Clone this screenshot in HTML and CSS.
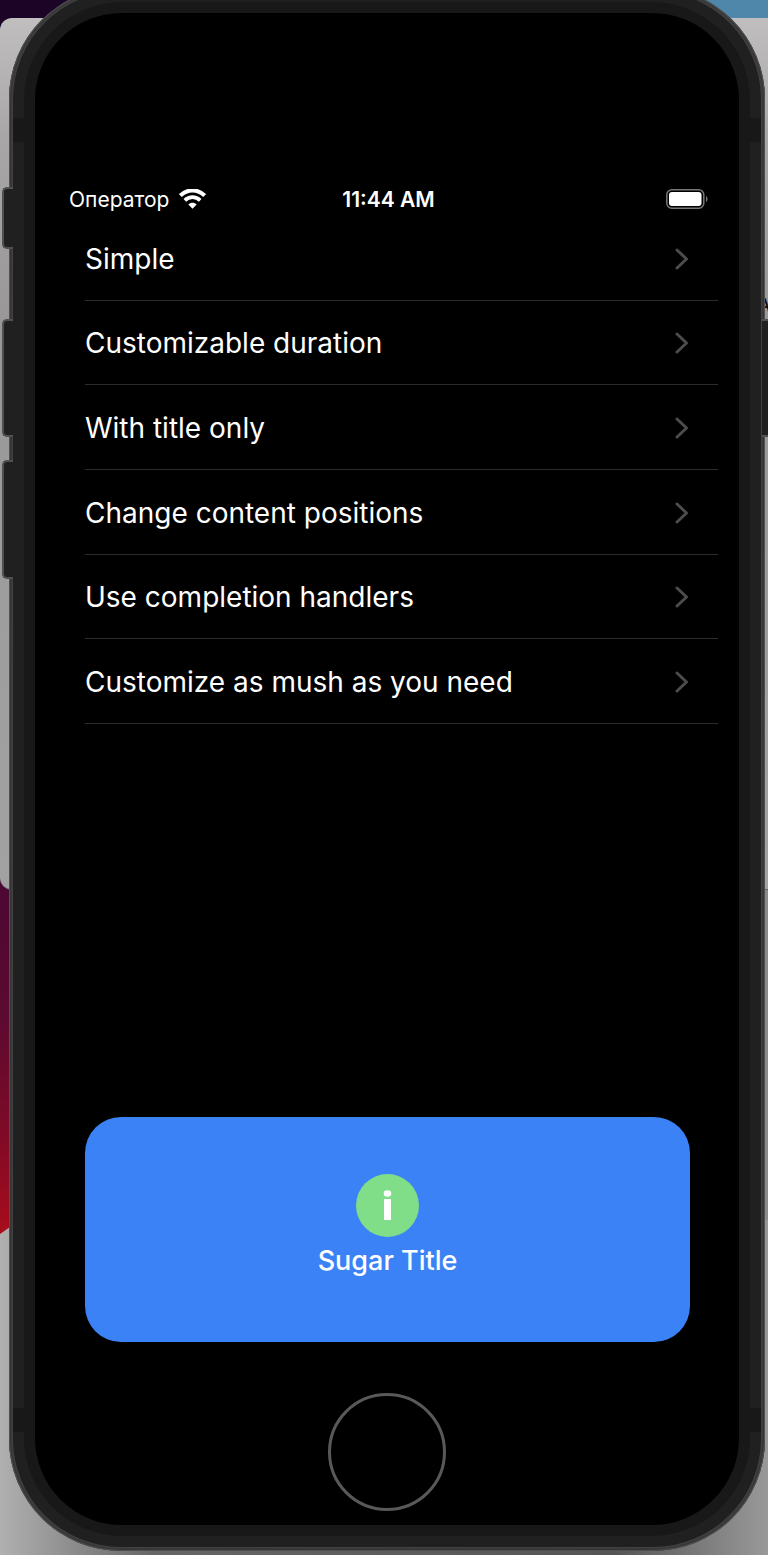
FILE: index.html
```html
<!DOCTYPE html>
<html lang="en">
<head>
<meta charset="utf-8">
<meta name="viewport" content="width=device-width, initial-scale=1">
<title>Sugar demo</title>
<link rel="stylesheet" href="styles.css">
</head>
<body>
<div class="desktop">
  <div class="wallpaper" aria-hidden="true">
    <div class="sky"></div>
    <div class="petal"></div>
    <div class="lower"></div>
    <div class="window"><span class="window-letter">A</span></div>
  </div>

  <main class="phone">
    <span class="key key-mute"></span>
    <span class="key key-up"></span>
    <span class="key key-down"></span>
    <span class="key key-power"></span>
    <div class="case">
      <span class="seam seam-top"></span>
      <span class="seam seam-bottom"></span>
      <div class="screen">
        <header class="status">
          <div class="carrier">
            <span>Оператор</span>
            <svg class="wifi" viewBox="0 0 26 20" aria-hidden="true">
              <path d="M1.300 6.200C8-.4 18-.4 24.700 6.200" fill="none" stroke="#fff" stroke-width="4"/>
              <path d="M5.600 10.800c4.200-4 10.600-4 14.800 0" fill="none" stroke="#fff" stroke-width="3.600"/>
              <path d="M13 19l-4-4.200c2.200-2.100 5.800-2.100 8 0z" fill="#fff"/>
            </svg>
          </div>
          <time class="clock">11:44 AM</time>
          <svg class="battery" viewBox="0 0 42 20" aria-hidden="true">
            <rect x=".8" y=".8" width="37" height="18.400" rx="5" fill="none" stroke="#77777a" stroke-width="1.500"/>
            <rect x="3" y="3" width="32.500" height="14" rx="3" fill="#fff"/>
            <path d="M40 7v6c2-1 2-5 0-6z" fill="#77777a"/>
          </svg>
        </header>

        <nav class="list">
          <a class="row" href="#simple">Simple<svg class="chevron" viewBox="0 0 14 22" aria-hidden="true"><path d="M2 2l9.500 9L2 20"/></svg></a>
          <a class="row" href="#duration">Customizable duration<svg class="chevron" viewBox="0 0 14 22" aria-hidden="true"><path d="M2 2l9.500 9L2 20"/></svg></a>
          <a class="row" href="#title">With title only<svg class="chevron" viewBox="0 0 14 22" aria-hidden="true"><path d="M2 2l9.500 9L2 20"/></svg></a>
          <a class="row" href="#positions">Change content positions<svg class="chevron" viewBox="0 0 14 22" aria-hidden="true"><path d="M2 2l9.500 9L2 20"/></svg></a>
          <a class="row" href="#handlers">Use completion handlers<svg class="chevron" viewBox="0 0 14 22" aria-hidden="true"><path d="M2 2l9.500 9L2 20"/></svg></a>
          <a class="row" href="#customize">Customize as mush as you need<svg class="chevron" viewBox="0 0 14 22" aria-hidden="true"><path d="M2 2l9.500 9L2 20"/></svg></a>
        </nav>

        <section class="alert" role="status">
          <svg class="info" viewBox="0 0 64 64" aria-hidden="true">
            <circle cx="31.500" cy="32.500" r="31.500" fill="#7fde87"/>
            <ellipse cx="31.500" cy="20.500" rx="3.800" ry="3.200" fill="#fff"/>
            <rect x="28" y="26" width="7" height="21" rx=".6" fill="#fff"/>
          </svg>
          <p class="alert-title">Sugar Title</p>
        </section>

        <button class="home" type="button" aria-label="Home"></button>
      </div>
    </div>
  </main>
</div>
</body>
</html>
```
FILE: styles.css
```css
* {
  box-sizing: border-box;
}

body {
  margin: 0;
  font-family: Inter, "Noto Sans", sans-serif;
  color: #fff;
}

.desktop {
  position: relative;
  display: flex;
  min-height: 100vh;
  overflow: hidden;
  background: #8c8b8b;
}

/* Desktop behind the device */
.wallpaper {
  position: absolute;
  inset: 0;
}

.sky {
  position: absolute;
  inset: 0 0 auto 0;
  height: 40px;
  background: linear-gradient(90deg, #1c0426 50%, #4f87ab 50%);
}

.petal {
  position: absolute;
  top: 870px;
  left: 0;
  width: 50%;
  height: 364px;
  background: linear-gradient(#4a0733, #5c0a30 40%, #7c0a28 70%, #a80d1c);
}

.lower {
  position: absolute;
  inset: 1220px 0 0 0;
  background: linear-gradient(90deg, #b0b0b0, #666 20%, #555 80%, #999);
  clip-path: polygon(0 14px, 20px 0, 100% 0, 100% 100%, 0 100%);
}

.window {
  position: absolute;
  inset: 18px 0 auto 0;
  height: 872px;
  border-bottom: 1px solid #666;
  border-radius: 12px 0 0 12px;
  background: linear-gradient(#c0bebf, #a8a6a7 120px, #999798 300px, #a3a2a2);
}

.window-letter {
  position: absolute;
  top: 276px;
  right: -3px;
  font-size: 19px;
  font-weight: 500;
  line-height: 23px;
  color: #111;
}

/* Device */
.phone {
  position: relative;
  flex: 1;
  display: flex;
  margin: -13px 3px 4px 9px;
  padding: 4px;
  border-radius: 112px;
  background: #464646;
  box-shadow: inset 0 0 0 1px #505050, inset 0 0 2px 3px #363636;
}

.case {
  position: relative;
  flex: 1;
  display: flex;
  padding: 11px;
  border-radius: 108px;
  background: #202020;
}

.seam {
  position: absolute;
  left: 0;
  right: 0;
  height: 24px;
  background: #181818;
}

.seam-top {
  top: 127px;
}

.seam-bottom {
  bottom: 115px;
}

.screen {
  position: relative;
  flex: 1;
  display: flex;
  flex-direction: column;
  min-width: 0;
  padding: 169px 0 14px;
  border: 11px solid #181818;
  border-radius: 98px;
  background: #000;
}

.key {
  position: absolute;
  left: -7px;
  width: 11px;
  border: 2px solid #50504f;
  border-right-width: 0;
  border-radius: 5px 0 0 5px;
  background: #202020;
}

.key-mute {
  top: 200px;
  height: 62px;
}

.key-up {
  top: 332px;
  height: 118px;
}

.key-down {
  top: 473px;
  height: 119px;
}

.key-power {
  top: 332px;
  right: -8px;
  left: auto;
  border-width: 2px 2px 2px 0;
  border-radius: 0 5px 5px 0;
  height: 118px;
}

/* Status bar */
.status {
  display: grid;
  grid-template-columns: 1fr auto 1fr;
  align-items: center;
  height: 34px;
  padding: 0 31px 0 34px;
  font-size: 21px;
  line-height: 27px;
}

.carrier {
  display: flex;
  align-items: center;
  gap: 10px;
}

.wifi {
  width: 27px;
  height: 21px;
}

.clock {
  font-weight: 600;
}

.battery {
  justify-self: end;
  width: 42px;
  height: 20px;
}

/* Options */
.list {
  display: grid;
  grid-auto-rows: 1fr;
  min-height: 508px;
  padding: 0 21px 0 50px;
}

.row {
  display: flex;
  align-items: center;
  justify-content: space-between;
  padding: 2px 29px 0 0;
  border-bottom: 1px solid #2c2c2e;
  color: inherit;
  font-size: 28px;
  line-height: 36px;
  text-decoration: none;
}

.chevron {
  width: 14px;
  height: 22px;
  fill: none;
  stroke: #4c4c4e;
  stroke-width: 3;
  stroke-linecap: round;
  stroke-linejoin: round;
}

/* Alert */
.alert {
  display: flex;
  flex-direction: column;
  align-items: center;
  gap: 7px;
  margin: auto 49px 51px 50px;
  padding: 56px 24px 64px;
  border-radius: 36px;
  background: #3c82f7;
}

.info {
  width: 64px;
  height: 64px;
}

.alert-title {
  margin: 0;
  font-size: 27px;
  font-weight: 500;
  line-height: 34px;
}

.home {
  align-self: center;
  width: 118px;
  height: 118px;
  padding: 0;
  border: 3px solid #595959;
  border-radius: 50%;
  background: #000;
}
```
